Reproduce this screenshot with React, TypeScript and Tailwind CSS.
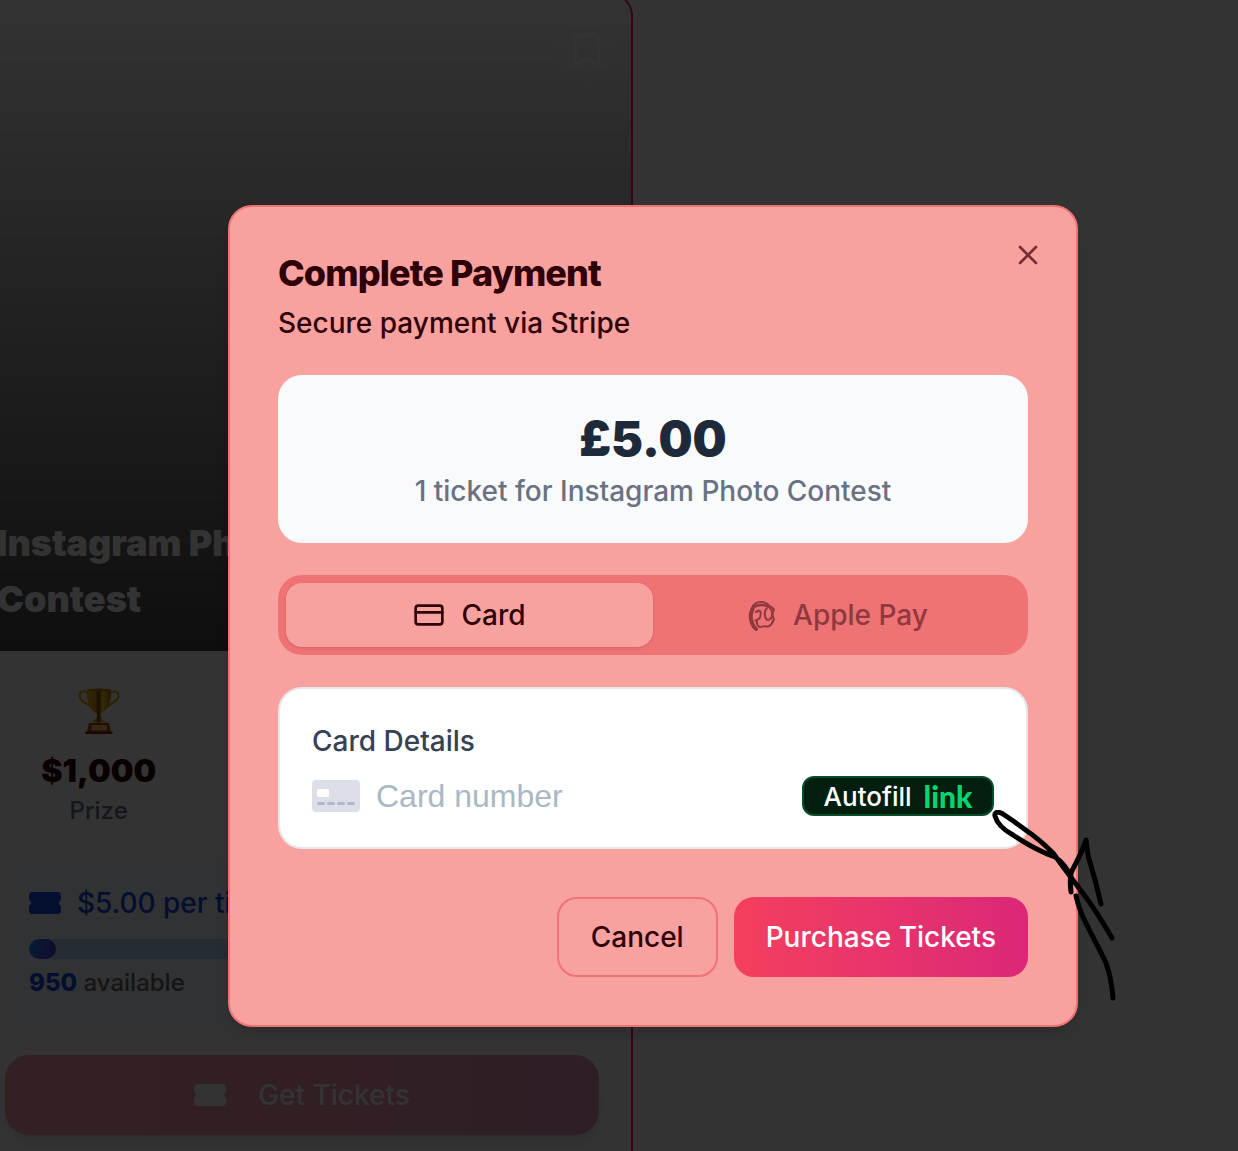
import React from "react";
import { Bookmark, CreditCard, X } from "lucide-react";

function TicketIcon({ className }: { className?: string }) {
  return (
    <svg viewBox="0 0 32 22" className={className} fill="currentColor" aria-hidden="true">
      <path d="M4 0h24a4 4 0 0 1 4 4v4a3.200 3.200 0 0 0 0 6v4a4 4 0 0 1-4 4H4a4 4 0 0 1-4-4v-4a3.200 3.200 0 0 0 0-6V4a4 4 0 0 1 4-4z" />
    </svg>
  );
}

function TrophyIcon() {
  return (
    <svg viewBox="0 0 42 46" className="h-[46px] w-[42px]" aria-hidden="true">
      <defs>
        <linearGradient id="gold" x1="0" x2="1">
          <stop offset="0" stopColor="#ffb800" />
          <stop offset="0.35" stopColor="#e0a000" />
          <stop offset="0.48" stopColor="#6e4800" />
          <stop offset="0.65" stopColor="#ffd21c" />
          <stop offset="1" stopColor="#b87800" />
        </linearGradient>
      </defs>
      <path
        d="M10 5C5 2 1 3.500 1.500 8c.6 5 6.500 7 13.500 12M32 5c5-3 9-1.500 8.500 3-.6 5-6.500 7-13.500 12"
        fill="none"
        stroke="#e8a800"
        strokeWidth="2.200"
      />
      <path d="M9 2h24c.5 12-3 19.500-9 23-1.500 1-1.500 3-.5 4.500 1 2 3 3.500 5 5H13.500c2-1.500 4-3 5-5 1-1.500 1-3.500-.5-4.500-6-3.500-9.500-11-9-23z" fill="url(#gold)" />
      <ellipse cx="21" cy="2" rx="12.500" ry="1.500" fill="#c98a00" />
      <path d="M11 35h20l2 9H9z" fill="#b54a00" />
      <path d="M13.500 37h15.500v5.500H13.500z" fill="#ffc477" />
      <path d="M7.500 43.500h27V46h-27z" fill="#8a2500" />
    </svg>
  );
}

function ApplePayIcon() {
  return (
    <svg
      viewBox="-4 0 32 31"
      className="h-[31px] w-8"
      fill="none"
      stroke="currentColor"
      strokeWidth="2"
      strokeLinecap="round"
      strokeLinejoin="round"
      aria-hidden="true"
    >
      <path d="M3 8C4.500 4 8 2 12 2c4 .1 7 2 9 4.500 1.500.4 3 1.500 3.800 3" />
      <path d="M3.500 8C8 4.500 15 4.500 21 7" strokeWidth="2.500" />
      <path d="M3.500 9C1.500 13 1.500 19 3 23c.8 2.500 2 4.500 4 6" strokeWidth="4" />
      <path d="M7 12l3-1.500 1.500 1c.3 2 .3 4-.5 6-.8 1.500-2.500 2.500-4.500 3" />
      <path d="M18 8c-3 2.500-3 8.500-.5 11.500 2 .8 3.800 0 4.500-2M21 8c2.500 3 2.500 7.500 1 10.500" />
      <path d="M24.800 10c-1.500 3-1.500 6.500.2 9.500-1 .8-1.700 1.500-1.500 2.500" />
      <path d="M8 20c-.5 3 .5 6 2.500 7 2 .3 3.500-1 5.500-.8 2.500.8 5.500.8 8-4.700" />
    </svg>
  );
}

function CardGlyph() {
  return (
    <svg viewBox="0 0 48 32" className="h-8 w-12 shrink-0" aria-hidden="true">
      <rect width="48" height="32" rx="4" fill="#dcdfe7" />
      <rect x="5" y="9" width="12" height="8" rx="1.500" fill="#fff" />
      <path d="M6.500 23.500h5M16.500 23.500h5M26.500 23.500h5M36.500 23.500h5" stroke="#b3b7ca" strokeWidth="3" strokeLinecap="round" />
    </svg>
  );
}

function ContestCard() {
  return (
    <article className="-mt-2 -ml-[29px] w-[662px] overflow-hidden rounded-3xl border-2 border-[#ff2056] bg-white pb-14">
      <div className="flex h-[657px] flex-col justify-between bg-linear-to-b from-transparent to-black/72 p-6">
        <button
          type="button"
          aria-label="Save contest"
          className="-mr-3 flex size-16 items-center justify-center self-end rounded-full bg-white/10 text-white"
        >
          <Bookmark className="size-10" strokeWidth={2} />
        </button>
        <h2 className="text-4xl leading-14 font-black text-white">
          Instagram Photo
          <br />
          Contest
        </h2>
      </div>
      <div className="p-8">
        <div className="grid grid-cols-3 gap-4">
          <div className="flex flex-col items-center">
            <div className="mb-3 flex h-14 items-center">
              <TrophyIcon />
            </div>
            <p className="text-[32px] leading-10 font-black text-[#2f0008]">$1,000</p>
            <p className="mt-1 text-2xl leading-8 font-medium text-gray-500">Prize</p>
          </div>
        </div>
        <div className="mt-8 rounded-3xl bg-[#f2f7fc] p-6">
          <p className="flex items-center gap-4 text-[28px] leading-10 font-medium text-blue-700">
            <TicketIcon className="h-[22px] w-8" />
            $5.00 per ticket
          </p>
          <div className="mt-4 h-5 overflow-hidden rounded-full bg-[#bfdff8]">
            <div className="h-full w-[5%] rounded-full bg-linear-to-r from-blue-500 to-indigo-600" />
          </div>
          <p className="mt-2 text-2xl leading-8 font-medium text-[#6b6b6b]">
            <strong className="font-extrabold text-blue-700">950</strong> available
          </p>
        </div>
        <button
          type="button"
          className="mt-8 flex h-20 w-full items-center justify-center gap-8 rounded-3xl bg-linear-to-r from-[#ffa0aa] to-[#eb96be] text-[28px] font-medium text-white shadow-lg"
        >
          <TicketIcon className="h-[22px] w-8" />
          Get Tickets
        </button>
      </div>
    </article>
  );
}

function Scribble() {
  return (
    <svg
      viewBox="0 0 130 200"
      className="pointer-events-none absolute top-[603px] left-[758px] h-[200px] w-[130px]"
      fill="none"
      stroke="#000"
      strokeWidth="5"
      strokeLinecap="round"
      strokeLinejoin="round"
      aria-hidden="true"
    >
      <path d="M124 128C113 109 104 95 94 82C84 69 76 58 65 43C56 34 48 27 39 21C31 15 24 10 15 4C10 1 6 2 7 6C9 14 16 20 25 25C37 33 53 42 67 47C73 51 78 56 82 65" />
      <path d="M83 82C82 75 82 69 83 63C86 56 94 43 98 30C99 36 99 42 101 49C105 62 109 76 113 94" />
      <path d="M88 86C90 94 92 101 95 107C103 124 111 138 118 153C122 164 124 174 125 188" />
    </svg>
  );
}

function PaymentDialog() {
  return (
    <section
      role="dialog"
      aria-labelledby="payment-title"
      className="relative w-full rounded-3xl border-2 border-[#ef7274] bg-[#f8a2a0] p-12 text-[#2f0008] shadow-lg"
    >
      <button type="button" aria-label="Close" className="absolute top-8 right-8 text-[#7a2c34]">
        <X className="size-8" strokeWidth={2} />
      </button>
      <h1 id="payment-title" className="text-4xl leading-9 font-extrabold tracking-tight">
        Complete Payment
      </h1>
      <p className="mt-3 text-[28px] leading-10 font-medium">Secure payment via Stripe</p>

      <div className="mt-8 rounded-3xl bg-gray-50 p-8 text-center">
        <p className="text-5xl leading-16 font-black text-gray-800">£5.00</p>
        <p className="text-[28px] leading-10 font-medium text-gray-500">1 ticket for Instagram Photo Contest</p>
      </div>

      <div role="tablist" className="mt-8 grid grid-cols-2 rounded-3xl bg-[#ef7274] p-2 text-[28px] font-medium">
        <button
          type="button"
          role="tab"
          aria-selected="true"
          className="flex h-16 items-center justify-center gap-4 rounded-2xl bg-[#f8a2a0] shadow-sm"
        >
          <CreditCard className="size-8" strokeWidth={2} />
          Card
        </button>
        <button
          type="button"
          role="tab"
          aria-selected="false"
          className="flex h-16 items-center justify-center gap-4 text-[#8f393f]"
        >
          <ApplePayIcon />
          Apple Pay
        </button>
      </div>

      <div className="mt-8 rounded-3xl border-2 border-gray-200 bg-white px-8 pt-8 pb-[31px]">
        <label htmlFor="card-number" className="block text-[28px] leading-10 font-medium text-gray-700">
          Card Details
        </label>
        <div className="mt-[15px] flex h-10 items-center gap-4">
          <CardGlyph />
          <input
            id="card-number"
            type="text"
            placeholder="Card number"
            className="min-w-0 flex-1 bg-transparent font-['Liberation_Sans',sans-serif] text-[32px] leading-10 text-gray-800 outline-none placeholder:text-[#aab7c4]"
          />
          <button
            type="button"
            className="flex h-10 w-48 items-center justify-center gap-3 rounded-xl border-2 border-[#05502b] bg-[#011e0f] text-[26px] font-medium text-white"
          >
            Autofill
            <span className="font-['Lato',sans-serif] text-[30px] font-black text-[#00d66f]">link</span>
          </button>
        </div>
      </div>

      <div className="mt-12 flex justify-end gap-4 text-[28px] font-medium">
        <button type="button" className="h-20 rounded-[20px] border-2 border-[#ef7274] px-8">
          Cancel
        </button>
        <button
          type="button"
          className="h-20 rounded-[20px] bg-linear-to-r from-[#f43f5e] to-[#db2777] px-8 text-white"
        >
          Purchase Tickets
        </button>
      </div>
      <Scribble />
    </section>
  );
}

export default function App() {
  return (
    <main className="relative h-screen overflow-hidden bg-white font-['Inter',sans-serif]">
      <ContestCard />
      <div className="absolute inset-0 flex items-start bg-black/80 pt-[205px] pr-40 pl-[228px]">
        <PaymentDialog />
      </div>
    </main>
  );
}
